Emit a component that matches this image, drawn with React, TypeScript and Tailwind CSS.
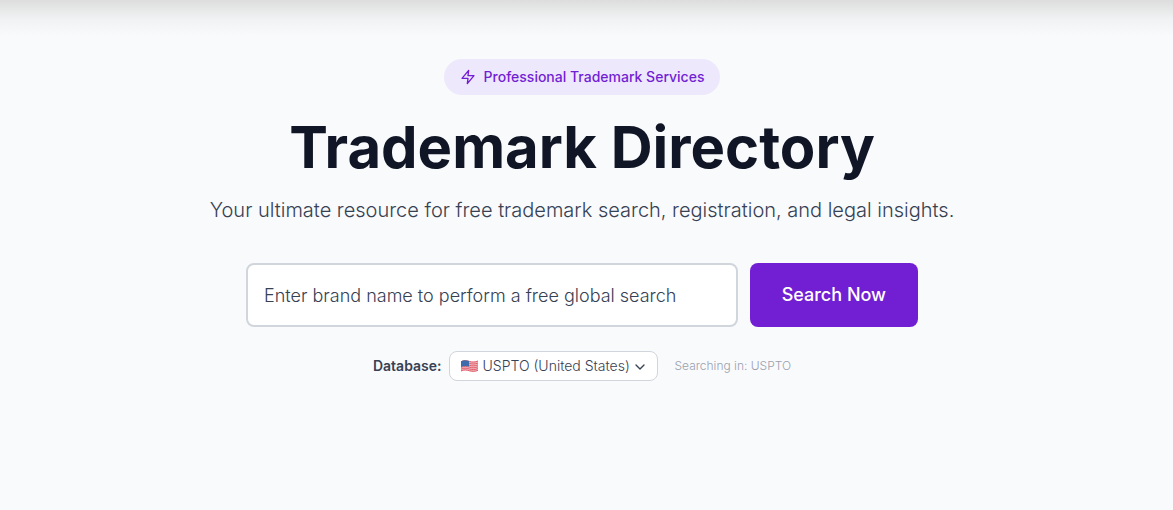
import { useState } from "react";
import { ChevronDown } from "lucide-react";
import { FiZap } from "react-icons/fi";

const databases = [
  { id: "USPTO", label: "USPTO (United States)" },
  { id: "EUIPO", label: "EUIPO (European Union)" },
  { id: "WIPO", label: "WIPO (International)" },
];

function UsFlag() {
  return (
    <svg viewBox="0 0 17 12" className="h-3 w-[17px]" aria-hidden="true">
      <path d="M0 1.2C3 -.3 5.500 .1 8.500 1C11.500 1.900 14 1.800 17 .6V10.800C14 12 11.500 12 8.500 11.200C5.500 10.400 3 10.200 0 11.400Z" fill="#f0b9bf" />
      <g fill="none" stroke="#e0606c" strokeWidth="1">
        <path d="M0 1.700C3 .2 5.500 .6 8.500 1.500S14 2.300 17 1.100" />
        <path d="M0 3.600C3 2.100 5.500 2.500 8.500 3.400S14 4.200 17 3" />
        <path d="M0 5.500C3 4 5.500 4.400 8.500 5.300S14 6.100 17 4.900" />
        <path d="M0 7.400C3 5.900 5.500 6.300 8.500 7.200S14 8 17 6.800" />
        <path d="M0 9.200C3 7.700 5.500 8.100 8.500 9S14 9.800 17 8.600" />
        <path d="M0 10.900C3 9.400 5.500 9.800 8.500 10.700S14 11.500 17 10.300" />
      </g>
      <path d="M0 1.200C3 -.3 5 .1 8 .9V6.600C5 5.800 3 5.600 0 7Z" fill="#3d6bab" />
    </svg>
  );
}

export default function App() {
  const [query, setQuery] = useState("");
  const [database, setDatabase] = useState("USPTO");

  return (
    <main className="min-h-screen bg-[#f9fafc] font-['Inter',sans-serif] text-gray-700">
      <div className="h-9 bg-linear-to-b from-[#dcdddc] via-[#f0f1f2] to-[#f9fafc]"></div>

      <section className="flex flex-col items-center pt-[23px] pr-[25px] pb-16 pl-4 text-center">
        <div className="flex h-9 items-center gap-2 rounded-full bg-[#eee8fc] px-4 text-sm font-medium text-[#721fd4]">
          <FiZap className="h-4 w-4" />
          Professional Trademark Services
        </div>

        <h1 className="mt-4 text-[58px] leading-[72px] font-bold text-[#101626]">Trademark Directory</h1>
        <p className="mt-3 text-xl leading-[30px] font-light text-gray-700">
          Your ultimate resource for free trademark search, registration, and legal insights.
        </p>

        <form className="mt-[38px] flex w-full max-w-2xl gap-3" onSubmit={(e) => e.preventDefault()}>
          <input
            type="text"
            aria-label="Brand name"
            value={query}
            onChange={(e) => setQuery(e.target.value)}
            placeholder="Enter brand name to perform a free global search"
            className="h-16 min-w-0 flex-1 rounded-lg border-2 border-gray-300 bg-white px-4 text-lg font-light text-gray-700 placeholder:text-gray-700"
          />
          <button type="submit" className="h-16 rounded-lg bg-[#721fd4] px-8 text-lg font-medium text-white">
            Search Now
          </button>
        </form>

        <div className="mt-6 flex flex-wrap items-center justify-center gap-4">
          <div className="flex items-center gap-2">
            <label htmlFor="database" className="text-sm font-semibold text-gray-700">
              Database:
            </label>
            <div className="relative">
              <select
                id="database"
                value={database}
                onChange={(e) => setDatabase(e.target.value)}
                className="h-[30px] w-[209px] appearance-none rounded-lg border border-gray-300 bg-white pr-6 pl-8 text-sm font-light text-gray-700"
              >
                {databases.map((db) => (
                  <option key={db.id} value={db.id}>
                    {db.label}
                  </option>
                ))}
              </select>
              <span className="pointer-events-none absolute inset-y-0 left-3 flex items-center">
                <UsFlag />
              </span>
              <ChevronDown className="pointer-events-none absolute top-2 right-[10px] h-4 w-4" />
            </div>
          </div>
          <span className="text-xs font-light text-gray-400">Searching in: {database}</span>
        </div>
      </section>
    </main>
  );
}
